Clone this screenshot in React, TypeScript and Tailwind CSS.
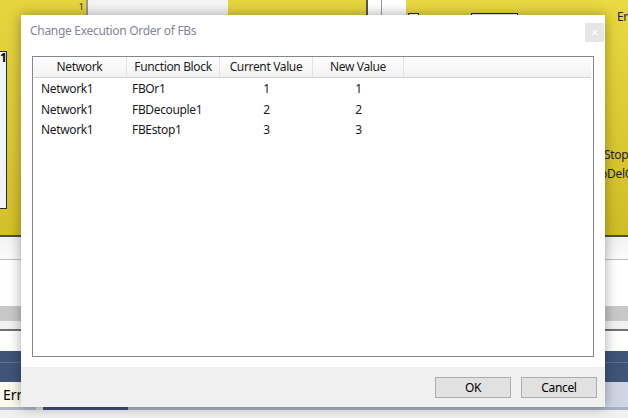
import React from 'react';

const font = { fontFamily: '"Segoe UI", "Noto Sans", "Open Sans", sans-serif' };

interface Row {
  network: string;
  block: string;
  current: string;
  next: string;
}

const rows: Row[] = [
  { network: 'Network1', block: 'FBOr1', current: '1', next: '1' },
  { network: 'Network1', block: 'FBDecouple1', current: '2', next: '2' },
  { network: 'Network1', block: 'FBEstop1', current: '3', next: '3' }
];

const Background = () => {
  return <div className="flex flex-col w-[628px] h-[418px] bg-[#f0f0f0] text-[12px]">
      <div className="flex h-[235px]">
        <div className="w-[88px] shrink-0 bg-gradient-to-b from-[#e6d53e] to-[#d3bf28] border-r-2 border-[#9a9a8a] flex flex-col">
          <div className="h-[14px] flex justify-end pr-[2px] text-[9px] leading-[14px] text-[#333]">1</div>
          <div className="mt-[37px] w-[7px] h-[158px] bg-[#eef5ff] border-y border-r border-[#2a2a2a] text-[12px] font-bold leading-[12px] text-black">1</div>
        </div>
        <div className="w-[140px] shrink-0 bg-[#f5f5f5]" />
        <div className="w-[140px] shrink-0 bg-gradient-to-b from-[#e6d53e] to-[#d3bf28] border-r-2 border-[#555]" />
        <div className="w-[38px] shrink-0 bg-white flex">
          <div className="w-[13px]" />
          <div className="w-px bg-[#9a9a9a]" />
        </div>
        <div className="flex-1 min-w-0 bg-gradient-to-b from-[#e9d942] to-[#d0bc26] flex">
          <div className="w-[196px] shrink-0 pt-[13px] flex gap-[52px] pl-[2px]">
            <div className="w-[11px] h-[11px] border border-[#333] bg-white" />
            <div className="w-[47px] h-[11px] border border-[#222] bg-white" />
          </div>
          <div className="flex-1 w-0 min-w-0 overflow-hidden whitespace-nowrap flex flex-col text-[#222] tracking-[-0.3px]" style={font}>
            <div className="pt-[9px] pl-[15px] leading-[16px]">Err</div>
            <div className="mt-[122px] ml-[2px] leading-[16px]">StopO</div>
            <div className="mt-[3px] -ml-[2px] leading-[16px]">oDelO</div>
          </div>
        </div>
      </div>
      <div className="h-[2px] bg-[#4d4d4d]" />
      <div className="h-[23px] bg-gradient-to-b from-[#f2f2f2] to-[#fbfbfb] border-b border-[#c0c0c0]" />
      <div className="h-[46px] bg-white" />
      <div className="h-[15px] bg-[#c8c8c8]" />
      <div className="h-[8px] bg-[#f2f2f2]" />
      <div className="h-[2px] bg-[#707070]" />
      <div className="h-[20px] bg-white" />
      <div className="h-[31px] bg-[#3f5479] flex flex-col">
        <div className="h-[11px]" />
        <div className="h-px bg-[#5d7096]" />
      </div>
      <div className="h-[25px] flex">
        <div className="w-[128px] bg-[#fdfbee] pl-[3px] leading-[26px] text-[14px] text-black" style={font}>Errors</div>
        <div className="flex-1 bg-[#cfd5e4]" />
      </div>
      <div className="h-[3px] flex">
        <div className="w-[36px] bg-[#b1b9c9]" />
        <div className="w-[7px] bg-[#dcdde2]" />
        <div className="w-[85px] bg-[#40507a]" />
        <div className="flex-1 bg-[#a9b1c3]" />
      </div>
      <div className="flex-1 bg-[#f0f0f0]" />
    </div>;
};

const Dialog = () => {
  return <div className="absolute left-[21px] top-[15px] w-[584px] h-[392px] bg-white flex flex-col shadow-[0_0_12px_rgba(0,0,0,0.35)] text-[12px] tracking-[-0.35px]" style={font}>
      <div className="h-[41px] flex justify-between">
        <div className="pl-[9px] pt-[7px] text-[12px] tracking-[-0.3px] leading-[18px] text-[#838596]">Change Execution Order of FBs</div>
        <div className="mt-[8px] mr-[1px] w-[19px] h-[19px] bg-[#e6e6e6] flex items-center justify-center text-white text-[13px] leading-none">×</div>
      </div>
      <div className="mx-[11px] h-[301px] border border-[#828790] flex flex-col pr-[2px]">
        <div className="h-[21px] flex bg-gradient-to-b from-white to-[#f2f2f2] border-b border-[#d5d5d5] text-[#1e1e1e]">
          <div className="w-[94px] text-center leading-[20px] border-r border-[#e3e3e3]">Network</div>
          <div className="w-[93px] text-center leading-[20px] border-r border-[#e3e3e3]">Function Block</div>
          <div className="w-[93px] text-center leading-[20px] border-r border-[#e3e3e3]">Current Value</div>
          <div className="w-[91px] text-center leading-[20px] border-r border-[#e3e3e3]">New Value</div>
          <div className="flex-1" />
        </div>
        <div className="h-px" />
        {rows.map((r, i) => <div key={i} className="h-[20.5px] flex items-center text-[#1b1b24]">
            <div className="w-[94px] pl-[8px]">{r.network}</div>
            <div className="w-[93px] pl-[5px]">{r.block}</div>
            <div className="w-[93px] text-center">{r.current}</div>
            <div className="w-[91px] text-center">{r.next}</div>
          </div>)}
      </div>
      <div className="h-[10px]" />
      <div className="flex-1 bg-[#f0f0f0] flex justify-end items-start gap-[10px] pt-[10px] pr-[8px]">
        <button className="w-[76px] h-[21px] bg-[#e1e1e1] border border-[#adadad] text-[12px] leading-[19px] text-black">OK</button>
        <button className="w-[76px] h-[21px] bg-[#e1e1e1] border border-[#adadad] text-[12px] leading-[19px] text-black">Cancel</button>
      </div>
    </div>;
};

const App = () => {
  return <div className="relative w-[628px] h-[418px] overflow-hidden">
      <Background />
      <Dialog />
    </div>;
};

export default App;
